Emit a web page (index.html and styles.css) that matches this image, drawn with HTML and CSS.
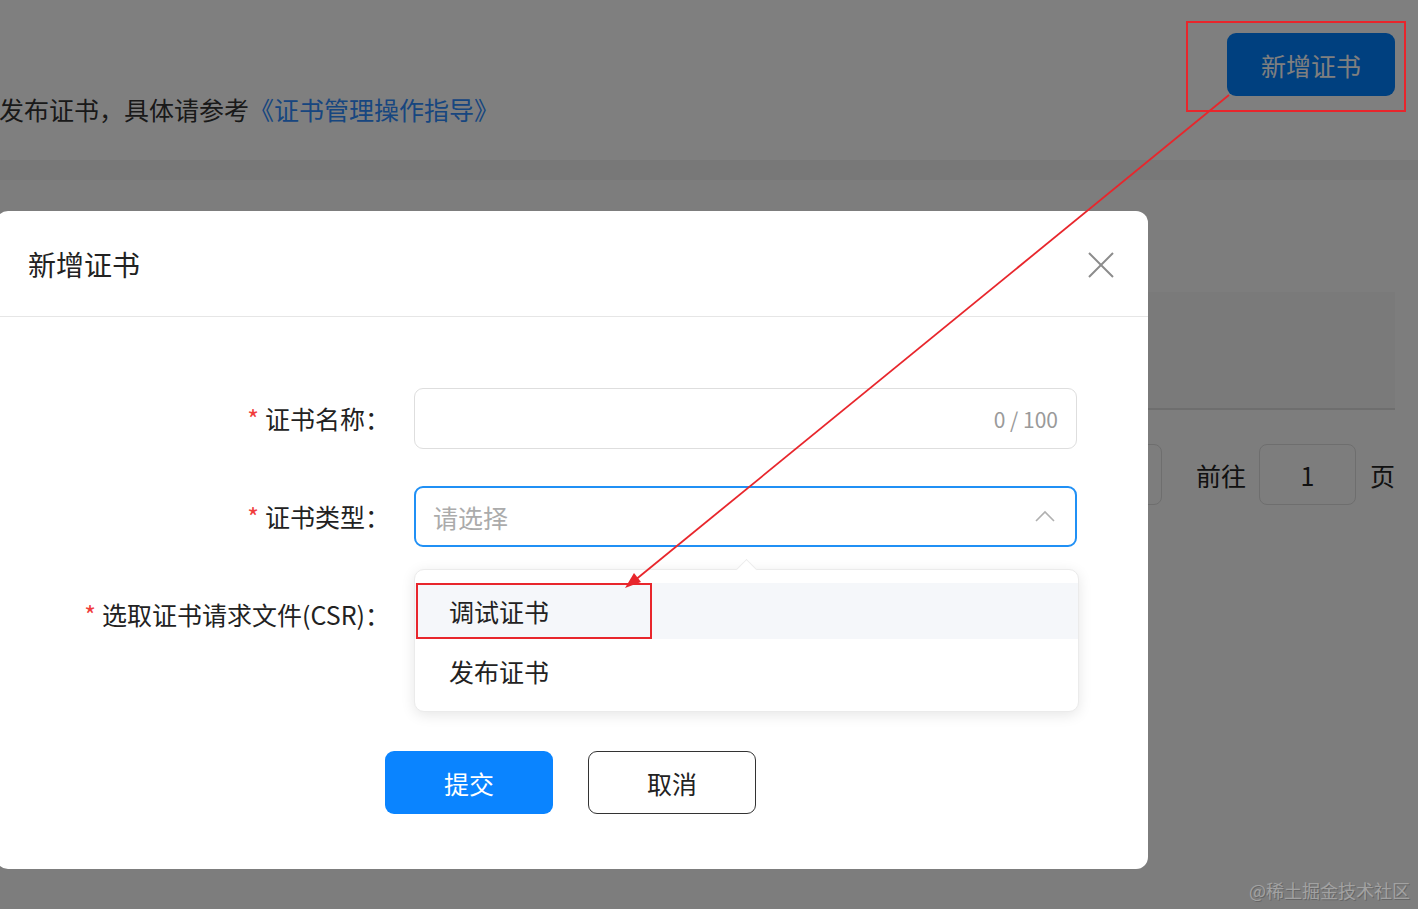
FILE: index.html
```html
<!DOCTYPE html>
<html lang="zh-CN">
<head>
    <meta charset="UTF-8">
    <meta name="viewport" content="width=device-width, initial-scale=1.0">
    <title>证书管理</title>
    <link rel="stylesheet" href="styles.css">
</head>
<body>
    <div class="page">
        <div class="toolbar">
            <p class="tip">发布证书，具体请参考<a href="#" class="tip-link">《证书管理操作指导》</a></p>
            <button class="btn-add">新增证书</button>
        </div>
        <div class="content">
            <div class="panel">
                <div class="table-box"></div>
                <div class="pager">
                    <span class="pager-box"></span>
                    <span class="pager-text goto">前往</span>
                    <span class="pager-input">1</span>
                    <span class="pager-text">页</span>
                </div>
            </div>
        </div>
    </div>

    <div class="mask"></div>

    <div class="dialog">
        <div class="dialog-header">
            <span class="dialog-title">新增证书</span>
            <svg class="close" width="28" height="28" viewBox="0 0 28 28">
                <path d="M2 2 L26 26 M26 2 L2 26" stroke="#8c8c8c" stroke-width="2" fill="none"/>
            </svg>
        </div>
        <form class="dialog-body">
            <div class="form-row">
                <label class="form-label"><i class="req">*</i>证书名称：</label>
                <div class="control input">
                    <span class="count">0 / 100</span>
                </div>
            </div>
            <div class="form-row">
                <label class="form-label"><i class="req">*</i>证书类型：</label>
                <div class="control select">
                    <span class="placeholder">请选择</span>
                    <svg class="caret" width="20" height="12" viewBox="0 0 20 12">
                        <path d="M1 11 L10 2 L19 11" stroke="#b0b0b0" stroke-width="1.6" fill="none"/>
                    </svg>
                    <ul class="dropdown">
                        <li class="option hover">调试证书</li>
                        <li class="option">发布证书</li>
                    </ul>
                </div>
            </div>
            <div class="form-row">
                <label class="form-label"><i class="req">*</i>选取证书请求文件(CSR)：</label>
                <div class="control"></div>
            </div>
            <div class="dialog-footer">
                <button type="button" class="btn btn-primary">提交</button>
                <button type="button" class="btn btn-plain">取消</button>
            </div>
        </form>
    </div>

    <svg class="marks" width="1418" height="909" viewBox="0 0 1418 909">
        <rect x="1187" y="22" width="218" height="89" fill="none" stroke="#e8262c" stroke-width="2"/>
        <rect x="417" y="584" width="234" height="54" fill="none" stroke="#e8262c" stroke-width="2"/>
        <line x1="1229" y1="95" x2="634" y2="581" stroke="#e8262c" stroke-width="1.8"/>
        <polygon points="625,588 641,582 634,573" fill="#e8262c"/>
    </svg>

    <div class="watermark">@稀土掘金技术社区</div>
</body>
</html>
```

FILE: styles.css
```css
* {
    box-sizing: border-box;
}

body {
    margin: 0;
    width: 1418px;
    height: 909px;
    overflow: hidden;
    position: relative;
    font-family: "Noto Sans CJK SC", "Noto Sans", sans-serif;
    color: #222;
    background: #fff;
}

.toolbar {
    height: 160px;
    display: flex;
    justify-content: space-between;
    align-items: flex-start;
    padding: 33px 23px 0 0;
    background: #fff;
}

.tip {
    margin: 60px 0 0 -1px;
    font-size: 25px;
    line-height: 32px;
    color: #333;
}

.tip-link {
    color: #2e8cff;
    text-decoration: none;
}

.btn-add {
    width: 168px;
    height: 63px;
    border: none;
    border-radius: 9px;
    background: #0080ff;
    color: #fff;
    font-family: inherit;
    font-size: 25px;
}

.content {
    background: #f1f1f1;
    padding-top: 20px;
    height: 749px;
}

.panel {
    background: #fafafa;
    height: 100%;
    padding: 112px 23px 0;
}

.table-box {
    height: 118px;
    background: #f4f4f4;
    border-bottom: 2px solid #dcdcdc;
}

.pager {
    margin-top: 34px;
    display: flex;
    justify-content: flex-end;
    align-items: center;
    height: 61px;
}

.pager-box {
    width: 90px;
    height: 61px;
    border: 1px solid #dcdcdc;
    border-radius: 8px;
}

.pager-text {
    font-size: 25px;
    color: #222;
}

.goto {
    margin: 0 13px 0 34px;
}

.pager-input {
    width: 97px;
    height: 61px;
    border: 1px solid #dcdcdc;
    border-radius: 8px;
    margin-right: 14px;
    display: flex;
    align-items: center;
    justify-content: center;
    font-size: 25px;
}

.mask {
    position: absolute;
    inset: 0;
    background: rgba(0, 0, 0, 0.5);
}

.dialog {
    position: absolute;
    left: -4px;
    top: 211px;
    width: 1152px;
    height: 658px;
    background: #fff;
    border-radius: 12px;
}

.dialog-header {
    height: 106px;
    display: flex;
    align-items: center;
    justify-content: space-between;
    padding: 0 33px 0 32px;
    border-bottom: 1px solid #e6e6e6;
}

.dialog-title {
    font-size: 28px;
    color: #222;
}

.close {
    margin-top: 2px;
}

.dialog-body {
    padding-top: 71px;
}

.form-row {
    display: flex;
    align-items: center;
    height: 61px;
    margin-bottom: 37px;
}

.form-label {
    width: 394px;
    text-align: right;
    font-size: 25px;
    line-height: 61px;
    color: #222;
}

.req {
    font-style: normal;
    color: #f03c3c;
    margin-right: 6px;
}

.control {
    margin-left: 24px;
    width: 663px;
    height: 61px;
    position: relative;
}

.input {
    border: 1.5px solid #dedede;
    border-radius: 9px;
    display: flex;
    align-items: center;
    justify-content: flex-end;
    padding-right: 18px;
}

.count {
    font-size: 21px;
    color: #9a9a9a;
}

.select {
    border: 2px solid #2090f5;
    border-radius: 9px;
    display: flex;
    align-items: center;
    justify-content: space-between;
    padding: 0 20px 0 17px;
}

.placeholder {
    font-size: 25px;
    color: #ababab;
}

.caret {
    margin-top: -2px;
}

.dropdown {
    position: absolute;
    left: -2px;
    top: 81px;
    width: 665px;
    margin: 0;
    padding: 13px 0 8px;
    list-style: none;
    background: #fff;
    border: 1px solid #ebebeb;
    border-radius: 10px;
    box-shadow: 0 3px 14px rgba(0, 0, 0, 0.1);
}

.dropdown::before {
    content: "";
    position: absolute;
    left: 324px;
    top: -8px;
    width: 14px;
    height: 14px;
    background: #fff;
    border-left: 1px solid #ebebeb;
    border-top: 1px solid #ebebeb;
    transform: rotate(45deg);
}

.option {
    height: 56px;
    line-height: 56px;
    padding-left: 34px;
    font-size: 25px;
    color: #222;
}

.option + .option {
    height: 64px;
    line-height: 64px;
}

.option.hover {
    background: #f5f7fa;
}

.dialog-footer {
    display: flex;
    gap: 35px;
    padding-left: 389px;
    margin-top: 106px;
}

.btn {
    width: 168px;
    height: 63px;
    border-radius: 9px;
    font-family: inherit;
    font-size: 25px;
}

.btn-primary {
    background: #0a84ff;
    border: none;
    color: #fff;
}

.btn-plain {
    background: #fff;
    border: 1px solid #333;
    color: #222;
}

.marks {
    position: absolute;
    left: 0;
    top: 0;
    pointer-events: none;
}

.watermark {
    position: absolute;
    right: 8px;
    bottom: 6px;
    font-size: 18px;
    color: #a2a2a2;
    text-shadow: 1px 1px 0 #666;
}
```
